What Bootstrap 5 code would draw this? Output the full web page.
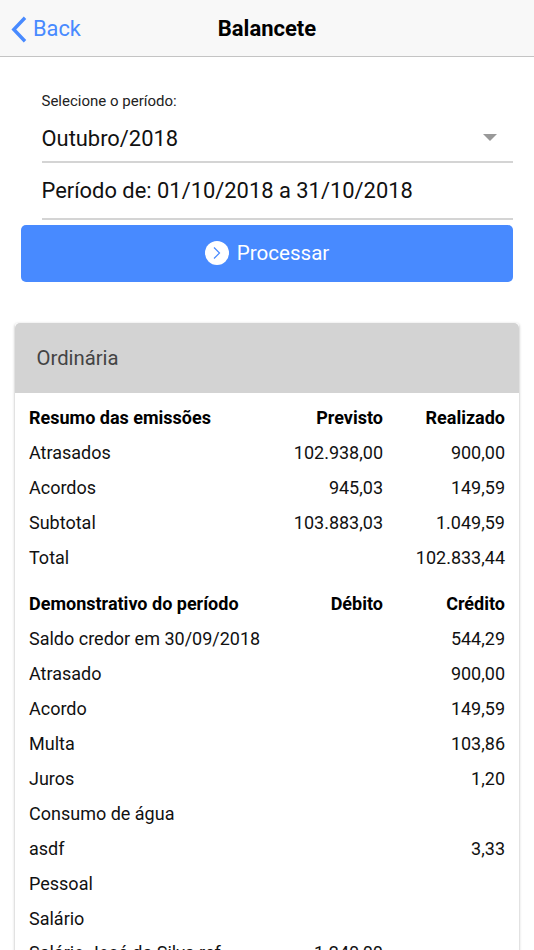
<!DOCTYPE html>
<html lang="pt">
<head>
<meta charset="utf-8">
<title>Balancete</title>
<link rel="stylesheet" href="https://cdn.jsdelivr.net/npm/bootstrap@5.3.0/dist/css/bootstrap.min.css">
<style>
html,body{height:950px;overflow:hidden;background:#fff;}
body{font-family:Roboto,"Liberation Sans",sans-serif;color:#000;}
.topbar{height:57px;background:#f8f8f8;border-bottom:1px solid #c4c4c4;position:relative;padding:0;}
.back-link{color:#488aff;font-size:21.8px;text-decoration:none;gap:6px;padding:2px 0 0 11px;}
.back-link span{padding-top:1px;}
.page-title{font-size:22px;font-weight:700;position:absolute;left:0;right:0;text-align:center;line-height:59px;margin:0;}
.form-area{padding:0 21px;}
.period-label{font-size:15px;color:#222;margin:36px 0 0 20.5px;line-height:17px;}
.field-line{margin-left:20.5px;border-bottom:2px solid #d4d4d4;font-size:21.9px;color:#111;}
.field-select{height:53px;padding:7px 16px 0 0;}
.field-period{height:57px;padding-top:2px;}
.caret-down{width:0;height:0;border-left:7px solid transparent;border-right:7px solid transparent;border-top:7px solid #999;margin-top:-4px;}
.go-btn{background:#488aff;color:#fff;height:57px;border:0;border-radius:5px;font-size:20.6px;width:100%;margin-top:5px;gap:8px;padding:0 0 1px;}
.go-btn:hover{background:#488aff;color:#fff;}
.go-circle{width:24px;height:24px;border-radius:50%;background:#fff;}
.summary-card{margin:41px 15px 0;border:0;border-radius:3px;box-shadow:0 1px 3px rgba(0,0,0,.32);overflow:hidden;}
.summary-head{background:#d3d3d3;height:70px;font-size:20.3px;color:#444;padding:0 0 0 21.5px;border:0;line-height:71px;border-radius:0;}
.summary-body{padding:7px 14px 0 14px;}
.data-table{width:100%;margin:0;font-size:18px;table-layout:fixed;}
.data-table td{padding:0;height:34.9px;vertical-align:middle;border:0;color:#111;white-space:nowrap;box-shadow:none;}
.data-table tr.head-row td{font-weight:700;color:#000;}
.data-table tr.section-gap td{height:47px;padding-top:12px;}
.col-prev{width:120px;text-align:right;}
.col-real{width:122px;text-align:right;}
</style>
</head>
<body>
<nav class="topbar d-flex align-items-center">
  <h1 class="page-title">Balancete</h1>
  <a href="#" class="back-link d-flex align-items-center">
    <svg width="16" height="27" viewBox="0 0 16 27"><path d="M14 1.8 2.8 13.5 14 25.2" fill="none" stroke="#488aff" stroke-width="3.4"/></svg>
    <span>Back</span>
  </a>
</nav>
<div class="form-area">
  <div class="period-label">Selecione o período:</div>
  <div class="field-line field-select d-flex align-items-center justify-content-between">
    <span>Outubro/2018</span><span class="caret-down"></span>
  </div>
  <div class="field-line field-period d-flex align-items-center">Período de: 01/10/2018 a 31/10/2018</div>
  <button type="button" class="btn go-btn d-flex align-items-center justify-content-center">
    <span class="go-circle d-flex align-items-center justify-content-center">
      <svg width="10" height="14" viewBox="0 0 10 14"><path d="M2 1.5 7.5 7 2 12.5" fill="none" stroke="#488aff" stroke-width="1.2"/></svg>
    </span>
    <span>Processar</span>
  </button>
</div>
<div class="card summary-card">
  <div class="card-header summary-head">Ordinária</div>
  <div class="card-body summary-body">
    <table class="table data-table">
      <tbody>
        <tr class="head-row"><td>Resumo das emissões</td><td class="col-prev">Previsto</td><td class="col-real">Realizado</td></tr>
        <tr><td>Atrasados</td><td class="col-prev">102.938,00</td><td class="col-real">900,00</td></tr>
        <tr><td>Acordos</td><td class="col-prev">945,03</td><td class="col-real">149,59</td></tr>
        <tr><td>Subtotal</td><td class="col-prev">103.883,03</td><td class="col-real">1.049,59</td></tr>
        <tr><td>Total</td><td class="col-prev"></td><td class="col-real">102.833,44</td></tr>
        <tr class="head-row section-gap"><td>Demonstrativo do período</td><td class="col-prev">Débito</td><td class="col-real">Crédito</td></tr>
        <tr><td>Saldo credor em 30/09/2018</td><td class="col-prev"></td><td class="col-real">544,29</td></tr>
        <tr><td>Atrasado</td><td class="col-prev"></td><td class="col-real">900,00</td></tr>
        <tr><td>Acordo</td><td class="col-prev"></td><td class="col-real">149,59</td></tr>
        <tr><td>Multa</td><td class="col-prev"></td><td class="col-real">103,86</td></tr>
        <tr><td>Juros</td><td class="col-prev"></td><td class="col-real">1,20</td></tr>
        <tr><td>Consumo de água</td><td class="col-prev"></td><td class="col-real"></td></tr>
        <tr><td>asdf</td><td class="col-prev"></td><td class="col-real">3,33</td></tr>
        <tr><td>Pessoal</td><td class="col-prev"></td><td class="col-real"></td></tr>
        <tr><td>Salário</td><td class="col-prev"></td><td class="col-real"></td></tr>
        <tr><td>Salário José da Silva ref.</td><td class="col-prev">1.240,00</td><td class="col-real"></td></tr>
      </tbody>
    </table>
  </div>
</div>
<script src="https://cdn.jsdelivr.net/npm/bootstrap@5.3.0/dist/js/bootstrap.bundle.min.js"></script>
</body>
</html>
